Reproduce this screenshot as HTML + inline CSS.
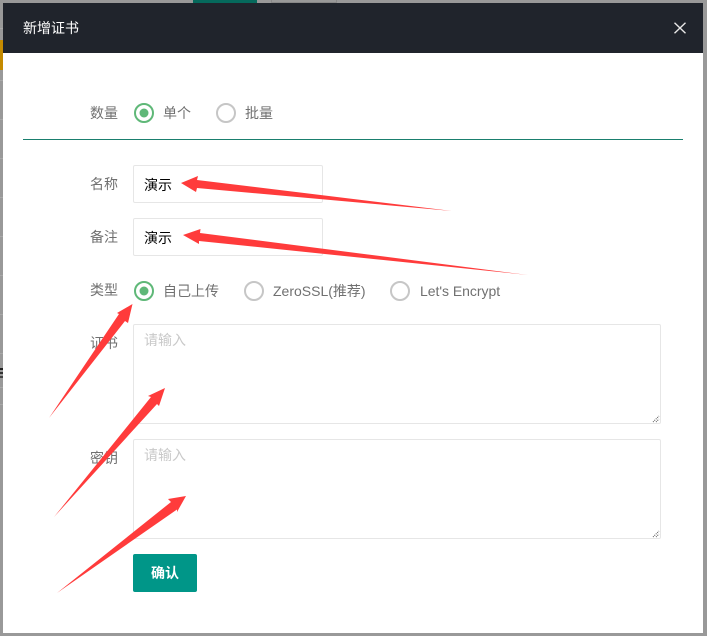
<!DOCTYPE html>
<html lang="zh">
<head>
<meta charset="utf-8">
<title>新增证书</title>
<style>
*{box-sizing:border-box;margin:0;padding:0}
html,body{width:707px;height:636px;overflow:hidden;background:#999;font-family:"Liberation Sans","Noto Sans CJK SC",sans-serif;font-size:14px}
.a{position:absolute}
.t{position:absolute;line-height:20px;white-space:nowrap;color:#707070}
.modal{left:3px;top:3px;width:700px;height:630px;background:#fff}
.head{left:3px;top:3px;width:700px;height:50px;background:#20242c}
.box{position:absolute;background:#fff;border:1px solid #e6e6e6;border-radius:2px}
.r{position:absolute;width:20px;height:20px;border-radius:50%;border:2px solid #c6c6c6;background:#fff}
.r.on{border-color:#5fb878}
.r.on:after{content:"";position:absolute;left:4px;top:4px;width:8px;height:8px;border-radius:50%;background:#5fb878;box-shadow:0 0 0 .5px #5fb878}
.g{position:absolute;left:0;width:3px;height:1px;background:#a8a8a8}
</style>
</head>
<body>
<div class="a" style="left:193px;top:0;width:64px;height:3px;background:#05695c"></div>
<div class="a" style="left:271px;top:0;width:66px;height:3px;border:1px solid #888;border-top:0;background:#999"></div>
<div class="a" style="left:0;top:40px;width:3px;height:30px;background:#c48a00"></div>
<div class="g" style="top:28px"></div><div class="g" style="top:80px"></div><div class="g" style="top:119px"></div><div class="g" style="top:158px"></div><div class="g" style="top:197px"></div><div class="g" style="top:236px"></div><div class="g" style="top:275px"></div><div class="g" style="top:314px"></div><div class="g" style="top:353px"></div><div class="g" style="top:387px"></div><div class="g" style="top:404px"></div>
<div class="a" style="left:0;top:368px;width:3px;height:2px;background:#222"></div>
<div class="a" style="left:0;top:372px;width:3px;height:2px;background:#333"></div>
<div class="a" style="left:0;top:376px;width:3px;height:2px;background:#444"></div>
<div class="a modal"></div>
<div class="a head"></div>
<div class="t" style="left:23px;top:18px;color:#fff">新增证书</div>
<svg class="a" style="left:673px;top:21px" width="14" height="14" viewBox="0 0 14 14"><path d="M1.5 1.8L12.5 12.2M12.5 1.8L1.5 12.2" stroke="#e8e8e8" stroke-width="1.4" fill="none"/></svg>

<div class="t" style="left:90px;top:103px">数量</div>
<div class="r on" style="left:134px;top:103px"></div>
<div class="t" style="left:163px;top:103px">单个</div>
<div class="r" style="left:216px;top:103px"></div>
<div class="t" style="left:245px;top:103px">批量</div>
<div class="a" style="left:23px;top:139px;width:660px;height:1px;background:#1a7f6e"></div>

<div class="t" style="left:90px;top:174px">名称</div>
<div class="box" style="left:133px;top:165px;width:190px;height:38px"></div>
<div class="t" style="left:144px;top:175px;color:#000">演示</div>

<div class="t" style="left:90px;top:227px">备注</div>
<div class="box" style="left:133px;top:218px;width:190px;height:38px"></div>
<div class="t" style="left:144px;top:228px;color:#000">演示</div>

<div class="t" style="left:90px;top:280px">类型</div>
<div class="r on" style="left:134px;top:281px"></div>
<div class="t" style="left:163px;top:281px">自己上传</div>
<div class="r" style="left:244px;top:281px"></div>
<div class="t" style="left:273px;top:281px">ZeroSSL(推荐)</div>
<div class="r" style="left:390px;top:281px"></div>
<div class="t" style="left:420px;top:281px;letter-spacing:-.03px">Let's Encrypt</div>

<div class="t" style="left:90px;top:333px">证书</div>
<div class="box" style="left:133px;top:324px;width:528px;height:100px"></div>
<div class="t" style="left:144px;top:330px;color:#c9c9c9">请输入</div>
<svg class="a" style="left:652px;top:415px" width="8" height="8" viewBox="0 0 8 8"><path d="M1 7L7 1M4 7L7 4" stroke="#555" stroke-width="1" stroke-dasharray="1 1" fill="none"/></svg>

<div class="t" style="left:90px;top:448px">密钥</div>
<div class="box" style="left:133px;top:439px;width:528px;height:100px"></div>
<div class="t" style="left:144px;top:445px;color:#c9c9c9">请输入</div>
<svg class="a" style="left:652px;top:530px" width="8" height="8" viewBox="0 0 8 8"><path d="M1 7L7 1M4 7L7 4" stroke="#555" stroke-width="1" stroke-dasharray="1 1" fill="none"/></svg>

<div class="a" style="left:133px;top:554px;width:64px;height:38px;background:#009688;border-radius:2px;color:#fff;text-align:center;line-height:38px;font-weight:bold;font-size:14px">确认</div>

<svg class="a" style="left:0;top:0" width="707" height="636" viewBox="0 0 707 636">
<g fill="#ff3b3b">
<polygon points="181,183 198,176 197,180 452,211 197,188 196,192"/>
<polygon points="183,235 200.5,229 200,233 528,275 199,241 199,244"/>
<polygon points="132.5,304 128,323 125,321 49,418 119,314 117,313"/>
<polygon points="165,388 159,406 157,404 54,517 151,397 148,396"/>
<polygon points="186,496 177,512 177,509.5 57,593 171,502 168,499"/>
</g>
</svg>
</body>
</html>
